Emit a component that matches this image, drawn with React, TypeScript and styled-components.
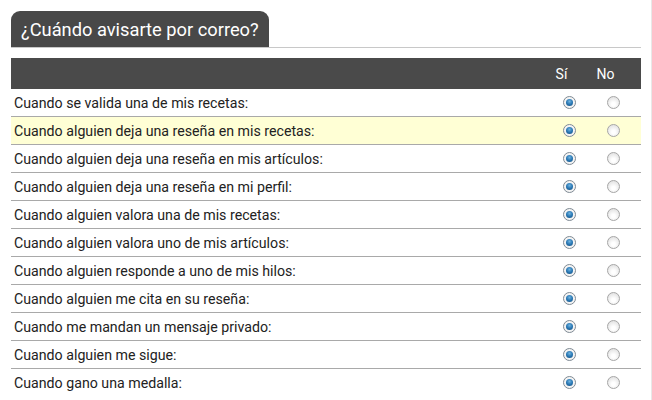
import React from 'react'
import styled, { createGlobalStyle } from 'styled-components'

const GlobalStyle = createGlobalStyle`
  body {
    margin: 0;
    background: #fff;
    font-family: Roboto, "Liberation Sans", Arial, sans-serif;
  }
`

const Page = styled.div`
  box-sizing: border-box;
  width: 652px;
  min-height: 400px;
  padding: 11px 11px 0 11px;
  border-right: 1px solid #e8e8e8;
`

const Section = styled.section`
  width: 630px;
`

const TitleBar = styled.div`
  display: flex;
  border-bottom: 1px solid #c8c8c8;
`

const TitleTab = styled.h2`
  margin: 0;
  height: 36px;
  padding: 0 10px;
  display: flex;
  align-items: center;
  background: #484848;
  color: #fff;
  font-size: 18.3px;
  font-weight: 400;
  border-radius: 9px 9px 0 0;
`

const Table = styled.div`
  margin-top: 10px;
`

const HeaderRow = styled.div`
  display: grid;
  grid-template-columns: 1fr 44px 44px;
  align-items: center;
  height: 31px;
  padding-right: 6px;
  background: #4a4a4a;
  color: #fff;
  font-size: 14px;
`

const HeaderCell = styled.div`
  text-align: center;
  padding-right: 15px;
`

const Row = styled.div<{ $highlight?: boolean; $last?: boolean }>`
  display: grid;
  grid-template-columns: 1fr 44px 44px;
  align-items: center;
  height: 27px;
  padding: 0 6px 0 3px;
  background: ${(p) => (p.$highlight ? '#ffffd5' : 'transparent')};
  border-bottom: ${(p) => (p.$last ? 'none' : '1px solid #a9a9a9')};
  color: #222;
  font-size: 14.2px;
`

const RadioCell = styled.div`
  display: flex;
  justify-content: center;
`

const Radio = styled.span<{ $checked?: boolean }>`
  box-sizing: border-box;
  display: flex;
  align-items: center;
  justify-content: center;
  width: 13px;
  height: 13px;
  border-radius: 50%;
  border: 1px solid ${(p) => (p.$checked ? '#7f8a94' : '#a6a6a6')};
  background: ${(p) =>
    p.$checked
      ? '#f4f4f4'
      : 'radial-gradient(circle at 50% 65%, #ffffff 20%, #e2e2e2 80%)'};

  &::after {
    content: '';
    display: ${(p) => (p.$checked ? 'block' : 'none')};
    width: 7px;
    height: 7px;
    border-radius: 50%;
    background: radial-gradient(circle at 50% 35%, #6fb3e0 0%, #2a78b4 50%, #134d7e 100%);
  }
`

const rules = [
  'Cuando se valida una de mis recetas:',
  'Cuando alguien deja una reseña en mis recetas:',
  'Cuando alguien deja una reseña en mis artículos:',
  'Cuando alguien deja una reseña en mi perfil:',
  'Cuando alguien valora una de mis recetas:',
  'Cuando alguien valora uno de mis artículos:',
  'Cuando alguien responde a uno de mis hilos:',
  'Cuando alguien me cita en su reseña:',
  'Cuando me mandan un mensaje privado:',
  'Cuando alguien me sigue:',
  'Cuando gano una medalla:',
]

const App: React.FC = () => (
  <Page>
    <GlobalStyle />
    <Section>
      <TitleBar>
        <TitleTab>¿Cuándo avisarte por correo?</TitleTab>
      </TitleBar>
      <Table>
        <HeaderRow>
          <div />
          <HeaderCell>Sí</HeaderCell>
          <HeaderCell>No</HeaderCell>
        </HeaderRow>
        {rules.map((label, i) => (
          <Row key={label} $highlight={i === 1} $last={i === rules.length - 1}>
            <span>{label}</span>
            <RadioCell>
              <Radio $checked />
            </RadioCell>
            <RadioCell>
              <Radio />
            </RadioCell>
          </Row>
        ))}
      </Table>
    </Section>
  </Page>
)

export default App
